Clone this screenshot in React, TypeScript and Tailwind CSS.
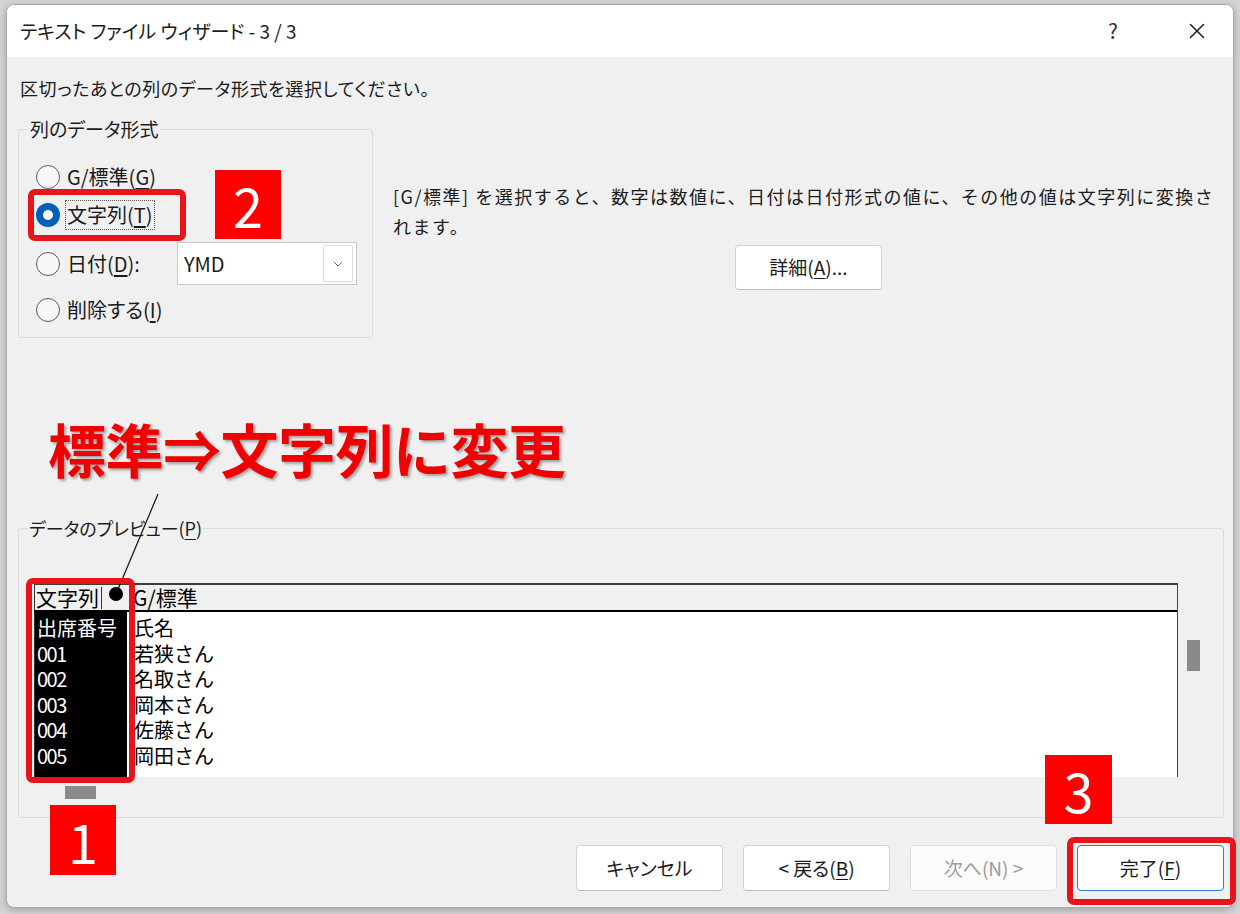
import { ChevronDown, X } from 'lucide-react';

function Radio({ checked }: { checked?: boolean }) {
  if (checked) {
    return (
      <span className="w-[24px] h-[24px] rounded-full bg-[#005fb8] flex items-center justify-center shrink-0">
        <span className="w-[10px] h-[10px] rounded-full bg-white" />
      </span>
    );
  }
  return <span className="w-[24px] h-[24px] rounded-full border-[1.5px] border-[#5c5c5c] bg-[#f8f8f8] shrink-0" />;
}

function Btn({ children, disabled, primary }: { children: React.ReactNode; disabled?: boolean; primary?: boolean }) {
  return (
    <button
      className={
        primary
          ? 'w-[147px] h-[46px] rounded-[4px] bg-white border border-[#2f7fd0] text-[19px] text-[#1b1b1b]'
          : disabled
            ? 'w-[147px] h-[46px] rounded-[4px] bg-[#fbfbfb] border border-[#dedede] text-[19px] text-[#9d9d9d]'
            : 'w-[147px] h-[46px] rounded-[4px] bg-white border border-[#d3d3d3] border-b-[#bdbdbd] text-[19px] text-[#1b1b1b]'
      }
    >
      {children}
    </button>
  );
}

const col1 = ['出席番号', '001', '002', '003', '004', '005'];
const col2 = ['氏名', '若狭さん', '名取さん', '岡本さん', '佐藤さん', '岡田さん'];

export default function App() {
  return (
    <div className="relative w-[1240px] h-[914px] overflow-hidden bg-[#d6d6d6] pt-[4px] pl-[6px] font-['Noto_Sans_CJK_JP','Noto_Sans',sans-serif] [font-feature-settings:'palt'] text-[#1b1b1b]">
      {/* dialog */}
      <div className="w-[1228px] h-[904px] rounded-[8px] bg-[#f0f0f0] border border-[#a9a9a9] shadow-[0_2px_8px_rgba(0,0,0,0.25)] flex flex-col overflow-hidden">
        {/* title bar */}
        <div className="h-[52px] bg-white flex items-center pl-[13px] shrink-0">
          <span className="text-[19px]">テキスト ファイル ウィザード - 3 / 3</span>
          <div className="ml-auto flex items-center">
            <span className="w-[94px] text-center text-[21px] text-[#333]">?</span>
            <span className="w-[73px] flex justify-center text-[#222]">
              <X size={26} strokeWidth={1.4} />
            </span>
          </div>
        </div>

        {/* body */}
        <div className="flex-1 flex flex-col pl-[11px] pr-[9px]">
          <div className="mt-[19px] h-[24px] leading-[24px] pl-[2px] text-[18px] tracking-[0.6px]">
            区切ったあとの列のデータ形式を選択してください。
          </div>

          <div className="flex mt-[29px]">
            {/* column data format group */}
            <div className="w-[355px] h-[209px] border border-[#dcdcdc] rounded-[3px] shrink-0">
              <div className="-mt-[11px] ml-[9px] px-[2px] w-fit h-[20px] leading-[20px] bg-[#f0f0f0] text-[19px]">列のデータ形式</div>
              <div className="flex flex-col pl-[17px] mt-[19px] text-[20px]">
                <div className="h-[38px] flex items-center gap-[7px]">
                  <Radio />
                  <span>G/標準(<u className="underline-offset-[3px]">G</u>)</span>
                </div>
                <div className="h-[38px] flex items-center gap-[5px]">
                  <Radio checked />
                  <span className="border border-dotted border-[#555] px-[1px] leading-[28px]">文字列(<u className="underline-offset-[3px]">T</u>)</span>
                </div>
                <div className="mt-[8px] h-[43px] flex items-center">
                  <Radio />
                  <span className="w-[117px] pl-[7px]">日付(<u className="underline-offset-[3px]">D</u>):</span>
                  <div className="w-[180px] h-[43px] bg-white border border-[#c9c9c9] flex items-center pl-[6px] pr-[3px]">
                    <span className="text-[20px]">YMD</span>
                    <span className="ml-auto w-[30px] h-[37px] border border-[#dadada] rounded-[2px] flex items-center justify-center text-[#555]">
                      <ChevronDown size={16} strokeWidth={1.3} />
                    </span>
                  </div>
                </div>
                <div className="mt-[6px] h-[38px] flex items-center gap-[7px]">
                  <Radio />
                  <span>削除する(<u className="underline-offset-[3px]">I</u>)</span>
                </div>
              </div>
            </div>

            {/* description */}
            <div className="pl-[20px] flex flex-col">
              <p className="mt-[52px] text-[18px] leading-[30px] whitespace-nowrap [font-feature-settings:normal] tracking-[1.5px]">
                [G/標準] を選択すると、数字は数値に、日付は日付形式の値に、その他の値は文字列に変換さ
                <br />
                れます。
              </p>
              <button className="mt-[4px] ml-[342px] w-[147px] h-[45px] rounded-[4px] bg-white border border-[#d3d3d3] border-b-[#bdbdbd] text-[19px]">
                詳細(<u className="underline-offset-[3px]">A</u>)...
              </button>
            </div>
          </div>

          {/* preview group */}
          <div className="mt-[190px] h-[290px] border border-[#dcdcdc] rounded-[3px] shrink-0">
            <div className="-mt-[11px] ml-[9px] px-[1px] w-fit h-[20px] leading-[20px] bg-[#f0f0f0] text-[18px]">
              データのプレビュー(<u className="underline-offset-[3px]">P</u>)
            </div>
            <div className="flex ml-[15px] mt-[45px] [font-feature-settings:normal]">
              <div className="flex flex-col">
                <div className="w-[1144px] border-r border-[#444] flex flex-col">
                  <div className="h-[29px] border-t-2 border-b-2 border-t-[#3c3c3c] border-b-black bg-[#f0f0f0] flex text-[21px] leading-[25px] text-black">
                    <div className="w-[93px] border-l border-[#333] flex items-center pl-[1px]">
                      <span>文字列</span>
                      <span className="ml-[2px] w-px h-[22px] bg-[#333]" />
                    </div>
                    <div className="pl-[6px] flex items-center">G/標準</div>
                  </div>
                  <div className="h-[165px] bg-white flex text-[20px] leading-[25.6px]">
                    <div className="w-[93px] bg-black text-white pt-[3px] pl-[2px] border-l border-[#333]">
                      {col1.map(v => (
                        <div key={v} className={v.length === 3 ? 'tracking-[-1.5px]' : ''}>{v}</div>
                      ))}
                    </div>
                    <div className="pl-[7px] pt-[3px] text-black">
                      {col2.map(v => (
                        <div key={v}>{v}</div>
                      ))}
                    </div>
                  </div>
                </div>
                <div className="mt-[9px] ml-[31px] w-[31px] h-[13px] bg-[#8a8a8a]" />
              </div>
              <div className="ml-[9px] mt-[57px] w-[13px] h-[31px] bg-[#8a8a8a]" />
            </div>
          </div>

          {/* buttons */}
          <div className="mt-[27px] flex justify-end gap-[20px]">
            <Btn>キャンセル</Btn>
            <Btn>
              &lt; 戻る(<u className="underline-offset-[3px]">B</u>)
            </Btn>
            <Btn disabled>次へ(N) &gt;</Btn>
            <Btn primary>
              完了(<u className="underline-offset-[3px]">F</u>)
            </Btn>
          </div>
        </div>
      </div>

      {/* annotations */}
      <div className="absolute left-[28px] top-[189px] w-[158px] h-[52px] border-[6px] border-[#e8141b] rounded-[7px]" />
      <div className="absolute left-[215px] top-[170px] w-[66px] h-[69px] bg-[#ff0000] text-white text-[54px] flex items-center justify-center">2</div>

      <div className="absolute left-[48px] top-[405px] text-[58px] font-bold text-[#f00000] tracking-[-0.5px] [font-feature-settings:normal] [text-shadow:2px_2px_3px_rgba(0,0,0,0.35)] whitespace-nowrap">
        標準⇒文字列に変更
      </div>
      <svg className="absolute left-0 top-0 pointer-events-none" width="1240" height="914">
        <line x1="158" y1="494" x2="116" y2="594" stroke="#111" strokeWidth="1.2" />
        <circle cx="116" cy="594" r="7" fill="#000" />
      </svg>

      <div className="absolute left-[26px] top-[578px] w-[109px] h-[205px] border-[6px] border-[#e8141b] rounded-[7px]" />
      <div className="absolute left-[50px] top-[805px] w-[66px] h-[70px] bg-[#ff0000] text-white text-[54px] flex items-center justify-center">1</div>

      <div className="absolute left-[1045px] top-[755px] w-[67px] h-[69px] bg-[#ff0000] text-white text-[54px] flex items-center justify-center">3</div>
      <div className="absolute left-[1067px] top-[837px] w-[169px] h-[68px] border-[6px] border-[#e8141b] rounded-[7px]" />
    </div>
  );
}
